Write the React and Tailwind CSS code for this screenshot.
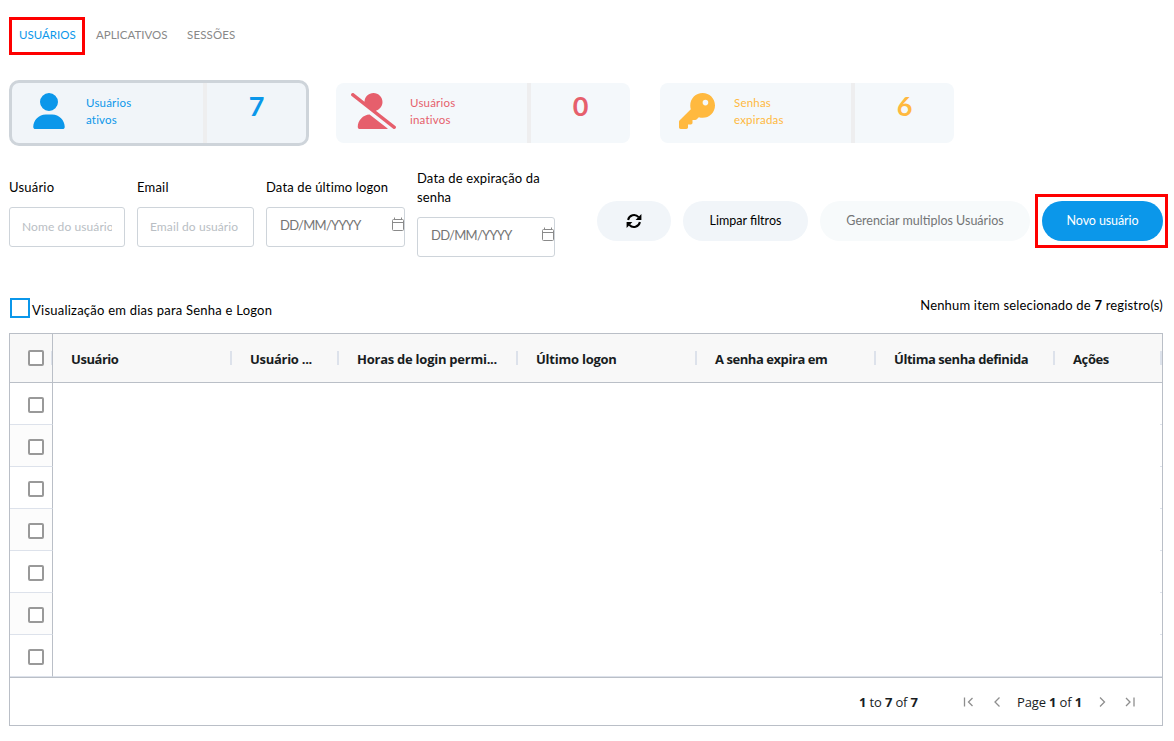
import { FaKey, FaUser, FaUserSlash } from "react-icons/fa6";

const columns = [
  { title: "Usuário", width: "w-[179px]", spacing: "tracking-[-0.45px]" },
  { title: "Usuário ...", width: "w-[107px]", spacing: "tracking-[-0.28px]" },
  { title: "Horas de login permi...", width: "w-[179px]", spacing: "tracking-[-0.25px]" },
  { title: "Último logon", width: "w-[179px]", spacing: "tracking-[-0.24px]" },
  { title: "A senha expira em", width: "w-[179px]", spacing: "tracking-[-0.44px]" },
  { title: "Última senha definida", width: "w-[179px]", spacing: "tracking-[-0.44px]" },
  { title: "Ações", width: "w-[107px]", spacing: "tracking-[-0.38px]" },
];

const rows = [1, 2, 3, 4, 5, 6, 7];

function StatCard({ icon: Icon, iconSize = "h-9 w-9", lines, value, color, selected }) {
  return (
    <button
      className={`flex overflow-hidden text-left ${color} ${
        selected
          ? "h-[66px] w-[300px] rounded-[10px] border-[3px] border-[#ced4da] bg-[#f1f5f9]"
          : "h-[60px] w-[294px] rounded-lg bg-[#f4f8fb]"
      }`}
    >
      <div className="flex h-full w-[191px] pt-[10px]">
        <div className="flex w-[74px] shrink-0 justify-center">
          <Icon className={`shrink-0 ${iconSize}`} />
        </div>
        <div className="pt-px text-[11.5px] leading-[17px] tracking-[0.2px]">
          {lines[0]}
          <br />
          {lines[1]}
        </div>
      </div>
      <div className="h-full w-1 bg-[#eeeeef]" />
      <div className="flex-1 pt-[6px] text-center text-[27px] leading-[34px] font-bold">{value}</div>
    </button>
  );
}

function CalendarIcon() {
  return (
    <svg width="12" height="14" viewBox="0 0 12 14" fill="none" stroke="#8a8a8a" className="shrink-0">
      <rect x="0.5" y="2.5" width="11" height="11" rx="1" />
      <path d="M0.5 5.5h11M2.5 0.5v2M9.5 0.5v2" />
    </svg>
  );
}

function RefreshIcon() {
  return (
    <svg width="16" height="16" viewBox="0 0 16 16" fill="none" stroke="black" strokeWidth="2">
      <path d="M2.1 7A6 6 0 0 1 12.6 4.2M13.9 9A6 6 0 0 1 3.4 11.8" />
      <path d="M15.4 1v6H9.6zM.6 15V9h5.8z" fill="black" stroke="none" />
    </svg>
  );
}

function TextField({ label, placeholder, width }) {
  return (
    <div className={`-mt-[2px] ${width}`}>
      <label className="mb-[10px] block text-[13px] leading-[19px] tracking-[0.2px] whitespace-nowrap">{label}</label>
      <input
        placeholder={placeholder}
        className="block h-10 w-full rounded-[3px] border border-[#ced4da] px-3 text-[12px] tracking-[0.1px] placeholder:text-[#b9bec4]"
      />
    </div>
  );
}

function DateField({ label, width }) {
  return (
    <div className={width}>
      <label className="mb-[10px] block text-[13px] leading-[19px] tracking-[0.15px]">{label}</label>
      <div className="flex h-10 items-center justify-between rounded-[3px] border border-[#ced4da] pb-[6px] pl-[13px] text-[13px] text-[#757575]">
        <span className="pt-[4px] tracking-[-0.75px]">DD/MM/YYYY</span>
        <CalendarIcon />
      </div>
    </div>
  );
}

function Check() {
  return <span className="block size-4 rounded-[2px] border-2 border-[#999] bg-white" />;
}

function PageArrow({ d }) {
  return (
    <svg width="12" height="12" viewBox="0 0 12 12" fill="none" stroke="#8e8e8e" strokeWidth="1.3">
      <path d={d} />
    </svg>
  );
}

function Grid() {
  return (
    <div className="mt-[14px] h-[393px] w-[1154px] border border-[#babfc7] font-['Open_Sans',sans-serif] text-[#181d1f]">
      <div className="flex h-[49px] border-b border-[#babfc7] bg-[#f8f8f8]">
        <div className="flex w-[43px] items-center border-r border-[#babfc7] pl-[18px]">
          <Check />
          <span className="ml-auto h-[14px] w-px bg-[#dde2eb]" />
        </div>
        {columns.map((col) => (
          <div key={col.title} className={`flex shrink-0 items-center justify-between pl-[18px] ${col.width}`}>
            <span className={`pt-[3px] text-[13px] font-bold whitespace-nowrap ${col.spacing}`}>{col.title}</span>
            <span className="h-[14px] w-[2px] bg-[#dde2eb]" />
          </div>
        ))}
      </div>
      {rows.map((row) => (
        <div key={row} className="flex h-[42px] justify-between">
          <div
            className={`flex w-[43px] items-center border-r border-r-[#babfc7] border-b border-b-[#dde2eb] pt-[2px] pl-[18px] ${
              row % 2 === 0 ? "bg-[#fcfcfc]" : "bg-white"
            }`}
          >
            <Check />
          </div>
          <div className={row === 7 ? "flex-1 border-b border-[#dde2eb]" : "w-[2px] border-b border-[#dde2eb]"} />
        </div>
      ))}
      <div className="flex h-12 items-center border-t border-[#babfc7] pl-[849px] text-[13px] tracking-[-0.15px] whitespace-nowrap">
        <span className="w-[103px] pt-[2px]">
          <b>1</b> to <b>7</b> of <b>7</b>
        </span>
        <PageArrow d="M2.5 1.5v9M10.5 2l-4 4 4 4" />
        <span className="w-4" />
        <PageArrow d="M9.5 1.5L5 6l4.5 4.5" />
        <span className="ml-[15px] w-[79px] pt-[2px]">
          Page <b>1</b> of <b>1</b>
        </span>
        <PageArrow d="M4 1.5L8.5 6 4 10.5" />
        <span className="w-4" />
        <PageArrow d="M2 2l4 4-4 4M10 1.5v9" />
      </div>
    </div>
  );
}

export default function App() {
  return (
    <div className="h-[741px] w-[1174px] overflow-hidden bg-white pt-[17px] pl-[9px] font-[Lato,sans-serif] text-black">
      <nav className="flex h-[38px] items-center text-[11.5px] text-[#888] whitespace-nowrap">
        <div className="flex h-[38px] w-[76px] items-center border-[3px] border-[#fe0000] pb-[3px] pl-[7px] text-[#0b97ea]">
          USUÁRIOS
        </div>
        <span className="ml-[11px] w-[91px] pb-[3px]">APLICATIVOS</span>
        <span className="pb-[3px] tracking-[0.15px]">SESSÕES</span>
      </nav>

      <div className="mt-[25px] flex h-[66px] items-center">
        <StatCard icon={FaUser} lines={["Usuários", "ativos"]} value="7" color="text-[#0b97ea]" selected />
        <div className="w-[27px]" />
        <StatCard
          icon={FaUserSlash}
          iconSize="h-9 w-[45px]"
          lines={["Usuários", "inativos"]}
          value="0"
          color="text-[#e65f6c]"
        />
        <div className="w-[30px]" />
        <StatCard icon={FaKey} lines={["Senhas", "expiradas"]} value="6" color="text-[#ffb93f]" />
      </div>

      <div className="mt-[23px] flex h-[88px] items-center">
        <div className="flex items-center gap-3">
          <TextField label="Usuário" placeholder="Nome do usuário" width="w-[116px]" />
          <TextField label="Email" placeholder="Email do usuário" width="w-[117px]" />
          <DateField label="Data de último logon" width="-mt-[2px] w-[139px]" />
          <DateField label="Data de expiração da senha" width="w-[138px]" />
        </div>
        <div className="ml-[42px] flex items-center pt-4 text-[12.5px]">
          <div className="flex gap-3">
            <button className="flex h-10 w-[74px] items-center justify-center rounded-full bg-[#f1f5f9]">
              <RefreshIcon />
            </button>
            <button className="h-10 w-[125px] rounded-full bg-[#f1f5f9] pt-px">Limpar filtros</button>
            <button className="h-10 w-[210px] rounded-full bg-[#f7fafb] pt-px text-[#737576]">
              Gerenciar multiplos Usuários
            </button>
          </div>
          <div className="ml-[5px] flex h-[54px] w-[133px] items-center border-[3px] border-[#fe0000] pl-1">
            <button className="h-10 w-[121px] rounded-full bg-[#0b97ea] pt-px tracking-[-0.1px] text-white">
              Novo usuário
            </button>
          </div>
        </div>
      </div>

      <div className="mt-10 flex h-[22px] w-[1154px] justify-between text-[13px] leading-[20px]">
        <label className="flex pt-px pl-px">
          <span className="mr-[2px] block size-5 border-2 border-[#0b97ea]" />
          <span className="pt-[2px] tracking-[0.23px]">Visualização em dias para Senha e Logon</span>
        </label>
        <span className="-mt-[2px] tracking-[0.18px]">
          Nenhum item selecionado de <b>7</b> registro(s)
        </span>
      </div>

      <Grid />
    </div>
  );
}
